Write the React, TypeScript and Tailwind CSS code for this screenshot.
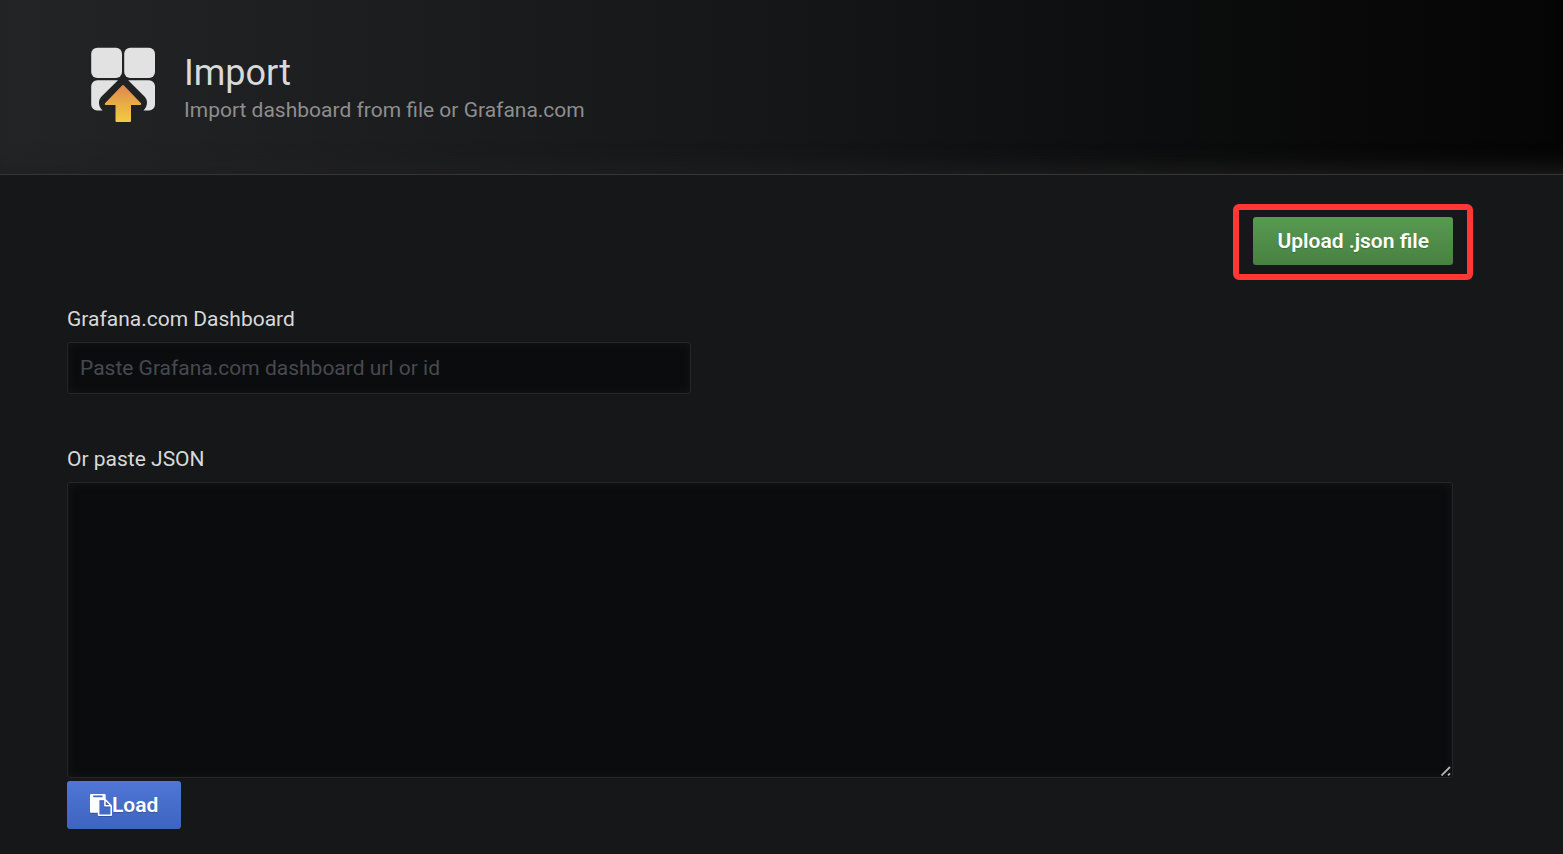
import { useState } from "react";

function ImportIcon() {
  return (
    <svg viewBox="0 0 66 78" className="h-[78px] w-[66px] shrink-0" aria-hidden="true">
      <defs>
        <linearGradient id="arrow" x1="0" y1="38" x2="0" y2="76" gradientUnits="userSpaceOnUse">
          <stop offset="0" stopColor="#df8250" />
          <stop offset="0.5" stopColor="#e8ac47" />
          <stop offset="1" stopColor="#f2cb40" />
        </linearGradient>
      </defs>
      <g fill="#e2e2e2">
        <rect x="1.200" y="1.700" width="30.800" height="30.300" rx="6" />
        <rect x="34.200" y="1.700" width="30.800" height="30.300" rx="6" />
        <path d="M7.200 34.200H28L11.500 50.500C8 54 8 60 12.500 64.500H7.200a6 6 0 0 1-6-6V40.200a6 6 0 0 1 6-6z" />
        <path d="M59 34.200H38.200L54.500 50.500C58 54 58 60 53.500 64.500H59a6 6 0 0 0 6-6V40.200a6 6 0 0 0-6-6z" />
      </g>
      <path
        fill="url(#arrow)"
        d="M32.300 39.300q.7-.7 1.400 0L51 57.300q.9 1.700-.8 1.700H41v16q0 1-1 1H26.500q-1 0-1-1V59h-9.700q-1.700 0-.8-1.700z"
      />
    </svg>
  );
}

function PasteIcon() {
  return (
    <svg viewBox="0 0 1792 1792" className="h-[22px] w-[22px] drop-shadow-[0_1px_0_rgba(0,0,0,0.2)]" fill="currentColor" aria-hidden="true">
      <path d="M768 1664h896v-640h-416q-40 0-68-28t-28-68v-416h-384v1152zm256-1440v-64q0-13-9.500-22.500t-22.500-9.500h-704q-13 0-22.500 9.500t-9.500 22.500v64q0 13 9.500 22.500t22.500 9.500h704q13 0 22.500-9.500t9.500-22.500zm256 672h299l-299-299v299zm512 128v672q0 40-28 68t-68 28h-960q-40 0-68-28t-28-68v-160h-544q-40 0-68-28t-28-68v-1344q0-40 28-68t68-28h1088q40 0 68 28t28 68v328q21 13 36 28l408 408q28 28 48 76t20 88z" />
    </svg>
  );
}

function PageHeader() {
  return (
    <header className="flex items-start gap-7 border-b border-[#363638] bg-linear-to-r from-[#232426] via-[#151618] to-[#050505] pt-[46px] pb-[50px] pl-[90px] shadow-[inset_0_-24px_22px_-20px_#202020]">
      <ImportIcon />
      <div className="pt-1">
        <h1 className="text-[36px] leading-[46px]">Import</h1>
        <p className="text-[21px] leading-7 text-[#8e8e8e]">
          Import dashboard from file or Grafana.com
        </p>
      </div>
    </header>
  );
}

export default function App() {
  const [gnetUrl, setGnetUrl] = useState("");
  const [jsonText, setJsonText] = useState("");

  return (
    <div className="min-h-screen bg-[#161719] font-['Roboto',sans-serif] text-[21px] leading-[32px] text-[#d8d9da]">
      <PageHeader />
      <main className="flex flex-col items-start pt-[42px] pr-[110px] pb-6 pl-[67px]">
        <div className="relative self-end">
          <button
            type="button"
            className="block h-12 rounded-[3px] bg-linear-to-b from-[#589a51] to-[#488142] px-6 font-semibold text-white [text-shadow:0_1px_1px_rgba(0,0,0,0.2)]"
          >
            Upload .json file
          </button>
          <div className="pointer-events-none absolute -inset-x-5 -top-[13px] -bottom-[15px] rounded-md border-6 border-[#ff3835]" />
        </div>

        <label htmlFor="gnet-url" className="mt-[38px]">
          Grafana.com Dashboard
        </label>
        <input
          id="gnet-url"
          type="text"
          value={gnetUrl}
          onChange={(e) => setGnetUrl(e.target.value)}
          placeholder="Paste Grafana.com dashboard url or id"
          className="mt-[7px] h-[52px] w-full max-w-[624px] rounded-[3px] border border-[#262628] bg-[#0b0c0e] px-3 shadow-[inset_0_0_8px_#161719] outline-none placeholder:text-[#464a50]"
        />

        <label htmlFor="json-text" className="mt-[49px]">
          Or paste JSON
        </label>
        <div className="relative mt-[7px] w-full">
          <textarea
            id="json-text"
            value={jsonText}
            onChange={(e) => setJsonText(e.target.value)}
            className="block h-[296px] w-full rounded-[3px] border border-[#262628] bg-[#0b0c0e] px-3 py-2 shadow-[inset_0_0_8px_#161719] outline-none [&::-webkit-resizer]:bg-transparent"
          />
          <svg
            viewBox="0 0 10 10"
            className="pointer-events-none absolute right-[2px] bottom-[2px] h-[10px] w-[10px]"
            stroke="#b4b4b4"
            strokeWidth="1.800"
            aria-hidden="true"
          >
            <path d="M.5 9.500l8.500-8.500M7 9.300l2-2" />
          </svg>
        </div>

        <button
          type="button"
          className="mt-[3px] flex h-12 items-center rounded-[3px] bg-linear-to-b from-[#5077d6] to-[#3e63c0] px-[23px] font-semibold text-white [text-shadow:0_1px_1px_rgba(0,0,0,0.2)]"
        >
          <PasteIcon />
          Load
        </button>
      </main>
    </div>
  );
}
